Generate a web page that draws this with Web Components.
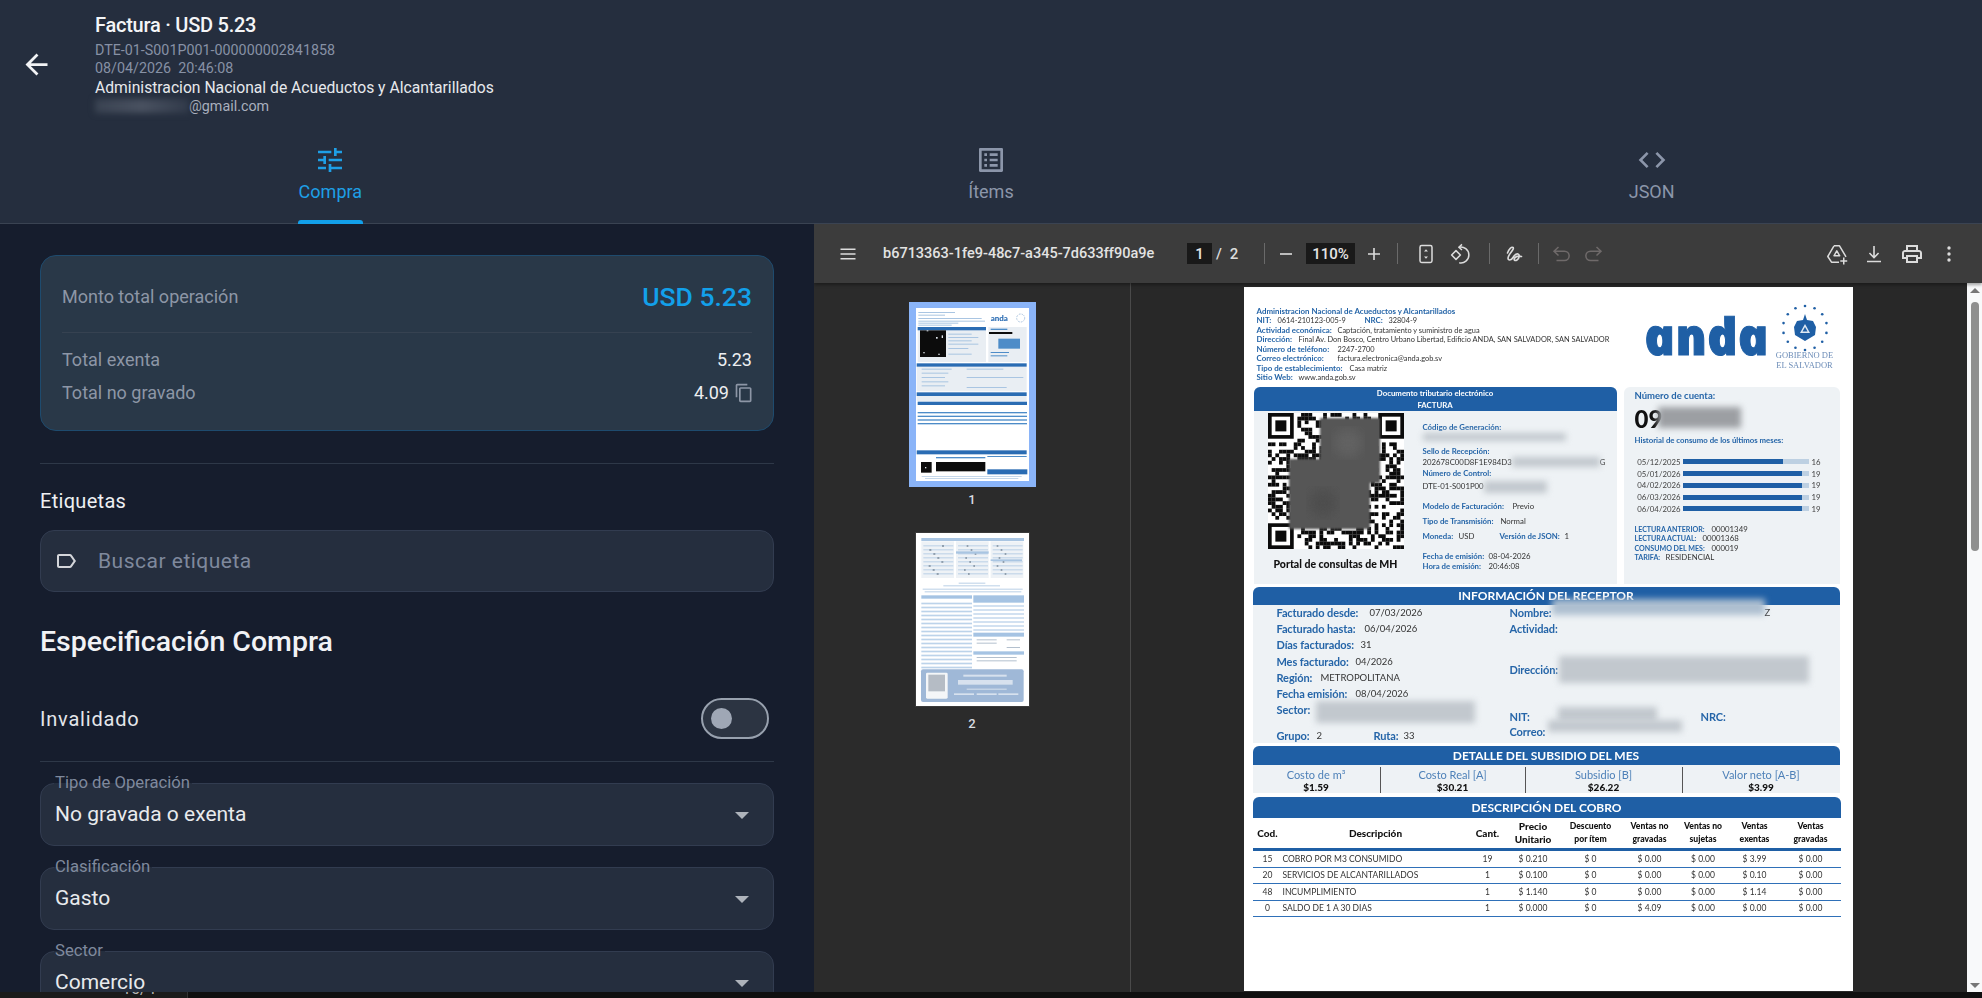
<!DOCTYPE html>
<html lang="es">
<head>
<meta charset="utf-8">
<title>Factura</title>
<style>
html, body { margin: 0; padding: 0; width: 1982px; height: 998px; overflow: hidden; background: #0f0f0f; font-family: Roboto, "Liberation Sans", sans-serif; }
app-shell { width: 1982px; height: 998px; }
</style>
</head>
<body>
<app-shell>
  <bill-header slot="header" title="Factura · USD 5.23" code="DTE-01-S001P001-000000002841858" date="08/04/2026&nbsp; 20:46:08" issuer="Administracion Nacional de Acueductos y Alcantarillados" mail="@gmail.com"></bill-header>
  <tab-bar slot="tabs">
    <tab-item icon="tune" active>Compra</tab-item>
    <tab-item icon="list">Ítems</tab-item>
    <tab-item icon="code">JSON</tab-item>
  </tab-bar>
  <form-panel slot="left">
    <total-card></total-card>
    <tag-search></tag-search>
    <toggle-row>Invalidado</toggle-row>
    <select-field label="Tipo de Operación" value="No gravada o exenta"></select-field>
    <select-field label="Clasificación" value="Gasto"></select-field>
    <select-field label="Sector" value="Comercio"></select-field>
  </form-panel>
  <pdf-viewer slot="right" file="b6713363-1fe9-48c7-a345-7d633ff90a9e"></pdf-viewer>
  <status-strip slot="bottom"></status-strip>
</app-shell>

<script>
const ICONS = {
  back: '<path fill="currentColor" d="M20 11H7.83l5.59-5.59L12 4l-8 8 8 8 1.41-1.41L7.83 13H20v-2z"/>',
  tune: '<path fill="currentColor" d="M3 17v2h6v-2H3zM3 5v2h10V5H3zm10 16v-2h8v-2h-8v-2h-2v6h2zM7 9v2H3v2h4v2h2V9H7zm14 4v-2H11v2h10zm-6-4h2V7h4V5h-4V3h-2v6z"/>',
  list: '<path fill="currentColor" d="M19 5v14H5V5h14m1.1-2H3.9c-.5 0-.9.4-.9.9v16.2c0 .4.4.9.9.9h16.2c.4 0 .9-.5.9-.9V3.9c0-.5-.5-.9-.9-.9zM11 7h6v2h-6V7zm0 4h6v2h-6v-2zm0 4h6v2h-6zM7 7h2v2H7zm0 4h2v2H7zm0 4h2v2H7z"/>',
  code: '<path fill="currentColor" d="M9.4 16.6L4.8 12l4.6-4.6L8 6l-6 6 6 6 1.4-1.4zm5.2 0l4.6-4.6-4.6-4.6L16 6l6 6-6 6-1.4-1.4z"/>',
  copy: '<path fill="currentColor" d="M16 1H4c-1.1 0-2 .9-2 2v14h2V3h12V1zm3 4H8c-1.1 0-2 .9-2 2v14c0 1.1.9 2 2 2h11c1.1 0 2-.9 2-2V7c0-1.1-.9-2-2-2zm0 16H8V7h11v14z"/>',
  label: '<path fill="currentColor" d="M17.63 5.84C17.27 5.33 16.67 5 16 5L5 5.01C3.9 5.01 3 5.9 3 7v10c0 1.1.9 1.99 2 1.99L16 19c.67 0 1.27-.33 1.63-.84L22 12l-4.37-6.16zM16 17H5V7h11l3.55 5L16 17z"/>',
  menu: '<path fill="currentColor" d="M4.5 6.5h15V8h-15zM4.5 11.2h15v1.5h-15zM4.5 16h15v1.5h-15z"/>',
  minus: '<path fill="currentColor" d="M6 11.2h12v1.6H6z"/>',
  plus: '<path fill="currentColor" d="M11.2 6h1.6v5.2H18v1.6h-5.2V18h-1.6v-5.2H6v-1.6h5.2z"/>',
  fit: '<rect x="6" y="3.6" width="12" height="16.8" rx="1.6" fill="none" stroke="currentColor" stroke-width="1.5"/><path fill="currentColor" d="M12 7.2l2 2.3h-4zM12 16.8l-2-2.3h4z"/>',
  rotate: '<g fill="none" stroke="currentColor" stroke-width="1.5" stroke-linejoin="round"><path d="M8 8.6L3.6 13 8 17.4l4.4-4.4z"/><path d="M11 5.2a8 8 0 1 1 .2 15.6"/><path d="M14 2.4l-3.2 2.8L14 8"/></g>',
  draw: '<path fill="none" stroke="currentColor" stroke-width="1.6" stroke-linecap="round" stroke-linejoin="round" d="M5.5 11C7 7 9.5 4.5 11 5.500c2 1.500-5 7-5 10.500 0 2.500 3 3 5-.5 1.500-2.500 3.500-4 5-3.500 2 .7 1.500 4.500-1 6-2 1.200-3.500 0-2.500-1.700 1-1.500 4-2.500 7-1.800"/>',
  undo: '<path fill="none" stroke="currentColor" stroke-width="1.5" d="M9.500 5L5 9.200l4.500 4.300M5 9.200h10.500a4.600 4.600 0 0 1 0 9.300H7.500"/>',
  redo: '<path fill="none" stroke="currentColor" stroke-width="1.5" d="M14.500 5L19 9.200l-4.500 4.300M19 9.200H8.500a4.600 4.600 0 0 0 0 9.300H16.500"/>',
  drive: '<g fill="none" stroke="currentColor" stroke-width="1.5" stroke-linejoin="round"><path d="M9 3.800h5.500l6.500 11M14 20.200H6.500l-3.700-5.700L9 3.800"/><path d="M11.800 8.800l2.900 5H9z"/></g><path fill="currentColor" d="M18 15.500h1.500v2.700h2.700v1.500h-2.700v2.700H18v-2.700h-2.700v-1.500H18z"/>',
  download: '<path fill="currentColor" d="M11.200 4h1.600v9.700l3.200-3.200 1.100 1.100-5.100 5.100-5.100-5.100 1.100-1.100 3.200 3.200zM5 18.800h14v1.500H5z"/>',
  print: '<path fill="currentColor" d="M19 8h-1V3H6v5H5c-1.660 0-3 1.340-3 3v6h4v4h12v-4h4v-6c0-1.660-1.340-3-3-3zM8 5h8v3H8V5zm8 12v2H8v-4h8v2zm2-2v-2H6v2H4v-4c0-.55.45-1 1-1h14c.55 0 1 .45 1 1v4h-2z"/>',
  more: '<circle cx="12" cy="6" r="1.700" fill="currentColor"/><circle cx="12" cy="12" r="1.700" fill="currentColor"/><circle cx="12" cy="18" r="1.700" fill="currentColor"/>'
};

class AppIcon extends HTMLElement {
  constructor() {
    super();
    this.attachShadow({mode: "open"});
  }
  connectedCallback() {
    const size = this.getAttribute("size") || 24;
    this.shadowRoot.innerHTML = `
      <style>
        :host { display: block; width: ${size}px; height: ${size}px; flex: none; }
        svg { display: block; width: 100%; height: 100%; }
      </style>
      <svg viewBox="0 0 24 24">${ICONS[this.getAttribute("name")]}</svg>`;
  }
}
customElements.define("app-icon", AppIcon);

class AppShell extends HTMLElement {
  constructor() {
    super();
    this.attachShadow({mode: "open"}).innerHTML = `
      <style>
        :host { display: grid; grid-template-columns: 814px 1168px; grid-template-rows: 128px 96px 768px 6px; }
        ::slotted([slot=header]), ::slotted([slot=tabs]), ::slotted([slot=bottom]) { grid-column: 1 / 3; }
      </style>
      <slot name="header"></slot>
      <slot name="tabs"></slot>
      <slot name="left"></slot>
      <slot name="right"></slot>
      <slot name="bottom"></slot>`;
  }
}
customElements.define("app-shell", AppShell);

class BillHeader extends HTMLElement {
  constructor() {
    super();
    this.attachShadow({mode: "open"});
  }
  connectedCallback() {
    this.shadowRoot.innerHTML = `
      <style>
        :host { display: grid; grid-template-columns: 95px 1fr; background: #252e3e; height: 128px; box-sizing: border-box; padding-top: 13px; }
        .back { color: #f2f3f5; margin: -13px 0 0 20px; align-self: center; }
        .title { font-size: 20px; line-height: 24px; font-weight: 500; letter-spacing: -.25px; color: #f4f5f7; margin-bottom: 4px; }
        .muted { font-size: 14.300px; line-height: 18px; color: #8791a5; }
        .issuer { font-size: 15.700px; line-height: 18px; color: #e7e9ed; margin-top: 2px; }
        .mail { display: flex; font-size: 14.300px; line-height: 18px; color: #a9b0bd; }
        .hide { width: 94px; height: 14px; margin-top: 2px; background: linear-gradient(90deg, #3a4352, #4a5261 50%, #313a4a); filter: blur(3px); }
      </style>
      <app-icon class="back" name="back" size="33"></app-icon>
      <div>
        <div class="title">${this.getAttribute("title")}</div>
        <div class="muted">${this.getAttribute("code")}</div>
        <div class="muted">${this.getAttribute("date")}</div>
        <div class="issuer">${this.getAttribute("issuer")}</div>
        <div class="mail"><div class="hide"></div>${this.getAttribute("mail")}</div>
      </div>`;
  }
}
customElements.define("bill-header", BillHeader);

class TabBar extends HTMLElement {
  constructor() {
    super();
    this.attachShadow({mode: "open"}).innerHTML = `
      <style>
        :host { display: grid; grid-template-columns: repeat(3, 1fr); background: #252e3e; height: 96px; box-sizing: border-box; border-bottom: 1px solid #3a4352; }
      </style>
      <slot></slot>`;
  }
}
customElements.define("tab-bar", TabBar);

class TabItem extends HTMLElement {
  constructor() {
    super();
    this.attachShadow({mode: "open"});
  }
  connectedCallback() {
    const active = this.hasAttribute("active");
    this.shadowRoot.innerHTML = `
      <style>
        :host { display: flex; flex-direction: column; align-items: center; color: ${active ? "#1e9fe6" : "#8c96aa"}; padding-top: 16px; }
        .text { display: block; font-size: 18px; line-height: 24px; margin-top: 4px; }
        .bar { width: 65px; height: 4px; margin-top: 16px; border-radius: 3px 3px 0 0; background: ${active ? "#12a0ea" : "transparent"}; }
      </style>
      <app-icon name="${this.getAttribute("icon")}" size="32"></app-icon>
      <span class="text"><slot></slot></span>
      <div class="bar"></div>`;
  }
}
customElements.define("tab-item", TabItem);

class FormPanel extends HTMLElement {
  constructor() {
    super();
    this.attachShadow({mode: "open"}).innerHTML = `
      <style>
        :host { display: block; background: #161d2d; height: 768px; overflow: hidden; padding: 31px 40px 0; box-sizing: border-box; width: 814px; }
      </style>
      <slot></slot>`;
  }
}
customElements.define("form-panel", FormPanel);

class TotalCard extends HTMLElement {
  constructor() {
    super();
    this.attachShadow({mode: "open"}).innerHTML = `
      <style>
        :host { display: block; box-sizing: border-box; height: 176px; padding: 24px 21px 0; background: #293848; border: 1px solid #1e4b6e; border-radius: 16px; font-size: 18px; color: #8d96a6; }
        .row { display: flex; justify-content: space-between; align-items: center; line-height: 24px; }
        .top { height: 34px; }
        .usd { font-size: 26.500px; font-weight: 500; color: #12a0ea; }
        hr { border: 0; height: 1px; background: #364251; margin: 18px 0 15px; }
        .val { color: #eceef1; font-size: 18px; display: flex; align-items: center; }
        .second { margin-top: 9px; }
        app-icon { color: #8d96a6; margin: 0 -2px 0 5px; }
      </style>
      <div class="row top"><span>Monto total operación</span><span class="usd">USD 5.23</span></div>
      <hr>
      <div class="row"><span>Total exenta</span><span class="val">5.23</span></div>
      <div class="row second"><span>Total no gravado</span><span class="val">4.09<app-icon name="copy" size="20"></app-icon></span></div>`;
  }
}
customElements.define("total-card", TotalCard);

class TagSearch extends HTMLElement {
  constructor() {
    super();
    this.attachShadow({mode: "open"}).innerHTML = `
      <style>
        :host { display: block; }
        hr { border: 0; height: 1px; background: #2e3848; margin: 32px 0 25px; }
        .caption { font-size: 20px; letter-spacing: .3px; line-height: 24px; color: #eef0f3; }
        .box { display: flex; align-items: center; box-sizing: border-box; height: 62px; margin-top: 17px; padding-left: 13px; background: #252e3e; border: 1px solid #323c50; border-radius: 14px; font-size: 21px; letter-spacing: .5px; color: #7f899d; }
        app-icon { color: #d4d6da; margin-right: 20px; }
        h2 { margin: 33px 0 0; font-size: 28.500px; line-height: 34px; font-weight: 500; color: #f1f2f5; }
      </style>
      <hr>
      <div class="caption">Etiquetas</div>
      <div class="box"><app-icon name="label" size="24"></app-icon>Buscar etiqueta</div>
      <h2>Especificación Compra</h2>`;
  }
}
customElements.define("tag-search", TagSearch);

class ToggleRow extends HTMLElement {
  constructor() {
    super();
    this.attachShadow({mode: "open"}).innerHTML = `
      <style>
        :host { display: block; margin-top: 39px; }
        .row { display: flex; justify-content: space-between; align-items: center; height: 41px; font-size: 20px; letter-spacing: .8px; color: #e4e6ea; }
        .track { display: flex; align-items: center; box-sizing: border-box; width: 68px; height: 41px; margin-right: 5px; padding-left: 8px; border: 2px solid #98a1ae; border-radius: 21px; background: #2c3442; }
        .thumb { width: 21px; height: 21px; border-radius: 50%; background: #9fa7b5; }
        hr { border: 0; height: 1px; background: #2e3848; margin: 22px 0 21px; }
      </style>
      <div class="row"><span><slot></slot></span><div class="track"><div class="thumb"></div></div></div>
      <hr>`;
  }
}
customElements.define("toggle-row", ToggleRow);

class SelectField extends HTMLElement {
  constructor() {
    super();
    this.attachShadow({mode: "open"});
  }
  connectedCallback() {
    this.shadowRoot.innerHTML = `
      <style>
        :host { display: block; position: relative; box-sizing: border-box; height: 63px; margin-bottom: 21px; padding: 18px 24px 0 14px; background: #252e3e; border: 1px solid #323c50; border-radius: 14px; }
        .label { position: absolute; left: 13px; top: -10px; padding: 0 2px 0 1px; font-size: 16.700px; line-height: 18px; color: #7f899d; background: linear-gradient(#161d2d 50%, #252e3e 50%); }
        .row { display: flex; justify-content: space-between; align-items: center; font-size: 21px; line-height: 24px; color: #e8eaed; }
        .arrow { width: 0; height: 0; border-left: 7px solid transparent; border-right: 7px solid transparent; border-top: 7px solid #aeb3bb; margin-top: 3px; }
      </style>
      <span class="label">${this.getAttribute("label")}</span>
      <div class="row"><span>${this.getAttribute("value")}</span><div class="arrow"></div></div>`;
  }
}
customElements.define("select-field", SelectField);

class PdfViewer extends HTMLElement {
  constructor() {
    super();
    this.attachShadow({mode: "open"});
  }
  connectedCallback() {
    this.shadowRoot.innerHTML = `
      <style>
        :host { display: flex; flex-direction: column; height: 768px; overflow: hidden; background: #282828; }
        .body { display: flex; flex: 1; min-height: 0; }
        .main { flex: 1; display: flex; justify-content: center; padding: 4px 2px 0 0; overflow: hidden; }
        .scroll { display: flex; width: 15px; flex: none; position: relative; background: #f8f9fa; }
        .scroll .thumb { width: 8px; height: 249px; margin: 19px 0 0 4px; border-radius: 4px; background: #8f8f8f; }
        .up, .down { position: absolute; left: 3px; width: 0; height: 0; border-left: 5px solid transparent; border-right: 5px solid transparent; }
        .up { top: 5px; border-bottom: 5px solid #777; }
        .down { bottom: 4px; border-top: 5px solid #777; }
      </style>
      <pdf-toolbar file="${this.getAttribute("file")}"></pdf-toolbar>
      <div class="body">
        <pdf-sidebar></pdf-sidebar>
        <div class="main"><pdf-page></pdf-page></div>
        <div class="scroll"><div class="up"></div><div class="thumb"></div><div class="down"></div></div>
      </div>`;
  }
}
customElements.define("pdf-viewer", PdfViewer);

class PdfToolbar extends HTMLElement {
  constructor() {
    super();
    this.attachShadow({mode: "open"});
  }
  connectedCallback() {
    this.shadowRoot.innerHTML = `
      <style>
        :host { display: flex; align-items: center; flex: none; box-sizing: border-box; height: 59px; padding: 0 21px 0 22px; background: #3c3c3c; color: #dcdcdc; font-size: 14px; box-shadow: 0 2px 3px rgba(0,0,0,.35); position: relative; z-index: 1; }
        .file { width: 304px; margin-left: 23px; font-size: 14.500px; font-weight: 500; color: #e3e3e3; white-space: nowrap; }
        .box { display: flex; align-items: center; justify-content: center; height: 21px; background: #191919; color: #e6e6e6; font-size: 15px; font-weight: 500; }
        .sep { width: 1px; height: 21px; background: #6a6a6a; }
        .off { color: #6f6a6a; }
        .num { text-align: center; font-size: 15px; font-weight: 500; }
        .grow { flex: 1; }
      </style>
      <app-icon name="menu" ></app-icon>
      <span class="file">${this.getAttribute("file")}</span>
      <span class="box" style="width:25px">1</span>
      <span class="num" style="width:8px;margin-left:3px">/</span>
      <span class="num" style="width:10px;margin-left:6px">2</span>
      <span class="sep" style="margin-left:25px"></span>
      <app-icon name="minus" style="margin-left:9px"></app-icon>
      <span class="box" style="width:49px;margin-left:8px">110%</span>
      <app-icon name="plus" style="margin-left:7px"></app-icon>
      <span class="sep" style="margin-left:11px"></span>
      <app-icon name="fit" style="margin-left:16px"></app-icon>
      <app-icon name="rotate" style="margin-left:10px"></app-icon>
      <span class="sep" style="margin-left:17px"></span>
      <app-icon name="draw" style="margin-left:12px"></app-icon>
      <span class="sep" style="margin-left:12px"></span>
      <app-icon class="off" name="undo" style="margin-left:10px"></app-icon>
      <app-icon class="off" name="redo" style="margin-left:9px"></app-icon>
      <span class="grow"></span>
      <app-icon name="drive"></app-icon>
      <app-icon name="download" style="margin-left:13px"></app-icon>
      <app-icon name="print" style="margin-left:14px"></app-icon>
      <app-icon name="more" style="margin-left:13px"></app-icon>`;
  }
}
customElements.define("pdf-toolbar", PdfToolbar);

function rectList(list, fill) {
  return list.map(r => `<rect x="${r[0]}" y="${r[1]}" width="${r[2]}" height="${r[3]}" fill="${fill}"/>`).join("");
}

class PdfSidebar extends HTMLElement {
  constructor() {
    super();
    this.attachShadow({mode: "open"});
  }
  connectedCallback() {
    const blue = "#2a6cb3", pale = "#a9c5e2", grey = "#e9eef3", ink = "#0c0c0c";
    let first = rectList([[113,125,205,10],[110,234,330,10],[110,321,330,11],[113,349,328,10],[110,495,330,12],[322,552,120,15]], blue);
    first = rectList([[325,125,115,105],[113,135,205,95],[110,244,330,74],[110,332,330,15]], grey) + first;
    first += rectList([[115,80,110,3],[115,88,80,3],[115,98,190,3],[115,106,200,3],[115,112,120,3],[115,118,100,3],[205,145,70,3],[205,155,90,3],[205,165,70,3],[205,175,90,3],[205,188,60,3],[205,205,70,3],[125,250,90,3],[125,262,80,3],[125,275,70,3],[125,288,80,3],[125,300,70,3],[260,250,110,3],[260,275,170,3],[260,305,120,3],[125,572,300,2],[135,578,280,2]], pale);
    first += rectList([[355,160,65,30],[332,130,50,4],[332,200,55,3],[332,210,50,3],[113,380,328,4],[113,391,328,4],[113,402,328,4],[113,413,328,4],[168,515,148,4],[322,512,118,3]], "#4d8cc8");
    first += rectList([[120,135,78,80],[168,530,148,28],[123,530,32,32],[327,140,70,6]], ink);
    first += rectList([[140,135,5,3],[168,155,5,5],[185,150,4,8],[130,200,4,4],[175,205,4,4],[135,545,4,4]], "#dfe5ea");
    first += rectList([[325,520,110,25]], "#ffffff");
    first += `<text x="332" y="106" font-family="Lato, sans-serif" font-size="24" font-weight="900" fill="${blue}">anda</text><circle cx="422" cy="98" r="12" fill="none" stroke="#7fa6cf" stroke-width="3" stroke-dasharray="2 3"/>`;

    let second = rectList([[124,68,308,9]], pale);
    second += rectList([[124,78,98,110],[228,78,98,110],[332,78,98,110]], "#eef2f6");
    for (let y = 90; y < 185; y += 12) {
      second += rectList([[130,y,90,3],[234,y,90,3],[338,y,90,3]], "#b9cfe6");
      second += rectList([[146 + (y % 50),y,6,4],[250 + (y % 40),y,5,4],[350 + (y % 30),y,5,4]], "#71808f");
    }
    second += rectList([[228,108,98,7],[332,132,94,5]], pale);
    second += rectList([[190,210,170,3],[128,220,300,3],[134,228,290,3],[236,202,80,3]], "#b9cfe6");
    second += rectList([[124,240,152,10],[280,240,152,22],[280,352,152,12],[280,408,152,10]], "#a5c3e3");
    for (let y = 262; y < 455; y += 12) {
      second += rectList([[124,y,152,5]], "#bcd3ea");
      if (y < 345) second += rectList([[280,y + 8,152,4]], "#bcd3ea");
    }
    second += rectList([[290,372,60,3],[380,372,40,3],[290,382,60,3],[380,395,40,3],[290,425,120,3],[290,435,120,3]], "#b3c0ce");
    second += `<rect x="123" y="462" width="308" height="98" rx="6" fill="#9fb8d7"/><rect x="138" y="472" width="65" height="78" rx="4" fill="#f4f6f8"/>`;
    second += rectList([[145,478,50,50]], "#b5bcc5");
    second += rectList([[250,478,130,6],[234,494,164,14],[260,520,120,3],[222,534,60,5],[290,534,60,5],[355,534,60,5]], "#d7e1ee");

    this.shadowRoot.innerHTML = `
      <style>
        :host { display: flex; flex-direction: column; align-items: center; flex: none; width: 317px; box-sizing: border-box; padding: 19px 0 0 0; border-right: 1px solid #4a4a4a; background: #2b2b2b; }
        .sel { padding: 6px 7px; background: #8ab4f8; }
        svg { display: block; width: 113px; height: 173px; }
        .n { font: 500 13px/16px Roboto, sans-serif; color: #d9dde2; margin: 5px 0 0; }
        .thumb { margin-top: 25px; outline: 1px solid #3a3a3a; }
      </style>
      <div class="sel"><svg viewBox="108 68 339 519" style="background:#fff;filter:blur(.5px)">${first}</svg></div>
      <div class="n">1</div>
      <div class="thumb"><svg viewBox="108 53 339 519" style="background:#fff;filter:blur(.5px)">${second}</svg></div>
      <div class="n" style="margin-top:10px">2</div>`;
  }
}
customElements.define("pdf-sidebar", PdfSidebar);

// the blurred codes in the invoice are noise, so a small seeded generator is enough
function buildQr() {
  let seed = 7321, cells = "";
  const rnd = () => (seed = (seed * 16807) % 2147483647) / 2147483647;
  const n = 37, s = 136 / n;
  const inFinder = (x, y) => (x < 8 && y < 8) || (x > n - 9 && y < 8) || (x < 8 && y > n - 9);
  for (let y = 0; y < n; y++) {
    for (let x = 0; x < n; x++) {
      if (!inFinder(x, y) && rnd() > .5) cells += `<rect x="${x * s}" y="${y * s}" width="${s + .1}" height="${s + .1}"/>`;
    }
  }
  const finder = (x, y) => `<rect x="${x * s}" y="${y * s}" width="${7 * s}" height="${7 * s}"/><rect x="${(x + 1) * s}" y="${(y + 1) * s}" width="${5 * s}" height="${5 * s}" fill="#fff"/><rect x="${(x + 2) * s}" y="${(y + 2) * s}" width="${3 * s}" height="${3 * s}"/>`;
  return `<svg class="qr" viewBox="0 0 136 136">
    <defs><filter id="soft"><feGaussianBlur stdDeviation="1.2"/></filter><filter id="softer"><feGaussianBlur stdDeviation="6"/></filter></defs>
    <rect width="136" height="136" fill="#fff"/>
    <g fill="#0b0b0b">${cells}${finder(0, 0)}${finder(n - 7, 0)}${finder(0, n - 7)}</g>
    <path d="M52 5h60v65h-10v46H21V46h31z" fill="#575757" filter="url(#soft)"/>
    <circle cx="80" cy="30" r="14" fill="#626262" filter="url(#softer)"/><circle cx="55" cy="90" r="14" fill="#4e4e4e" filter="url(#softer)"/>
  </svg>`;
}

function buildEmblem() {
  let dots = "";
  for (let i = 0; i < 14; i++) {
    const a = i / 14 * Math.PI * 2 - Math.PI / 2;
    dots += `<circle cx="${24 + 22 * Math.cos(a)}" cy="${24 + 22 * Math.sin(a)}" r="1.300"/>`;
  }
  return `<svg class="emblem" viewBox="0 0 48 48"><g fill="#1f5fa5">${dots}
    <path d="M24 10l2 6 6 1 3 6-1 8-5 3-5 3-5-3-5-3-1-8 3-6 6-1z"/></g>
    <path d="M24 20l5 9H19z" fill="#dfe9f3"/><path d="M24 23l2.500 4.500h-5z" fill="#1f5fa5"/></svg>`;
}

class PdfPage extends HTMLElement {
  constructor() {
    super();
    this.attachShadow({mode: "open"});
  }
  connectedCallback() {
    const head = [
      ["Precio<br>Unitario", "font-size:10px"], ["Descuento<br>por ítem"], ["Ventas no<br>gravadas"], ["Ventas no<br>sujetas"], ["Ventas<br>exentas"], ["Ventas<br>gravadas"]
    ];
    const rows = [
      ["15", "COBRO POR M3 CONSUMIDO", "19", "$ 0.210", "$ 0", "$ 0.00", "$ 0.00", "$ 3.99", "$ 0.00"],
      ["20", "SERVICIOS DE ALCANTARILLADOS", "1", "$ 0.100", "$ 0", "$ 0.00", "$ 0.00", "$ 0.10", "$ 0.00"],
      ["48", "INCUMPLIMIENTO", "1", "$ 1.140", "$ 0", "$ 0.00", "$ 0.00", "$ 1.14", "$ 0.00"],
      ["0", "SALDO DE 1 A 30 DIAS", "1", "$ 0.000", "$ 0", "$ 4.09", "$ 0.00", "$ 0.00", "$ 0.00"]
    ];
    const usage = [["05/12/2025", 80, "16"], ["05/01/2026", 95, "19"], ["04/02/2026", 95, "19"], ["06/03/2026", 95, "19"], ["06/04/2026", 95, "19"]];
    const lab = (text, w) => `<b class="lab" style="width:${w}px">${text}</b>`;
    this.shadowRoot.innerHTML = `
      <style>
        :host { display: block; flex: none; width: 609px; height: 704px; box-sizing: border-box; padding: 0 13px 0 9px; background: #fff; color: #333; font-family: Lato, "Open Sans", sans-serif; font-size: 7.800px; overflow: hidden; filter: blur(.3px); }
        b { color: #2565a8; font-weight: 700; }
        .lab { display: inline-block; vertical-align: top; white-space: nowrap; }
        .top { display: flex; height: 100px; }
        .lines { flex: 1; padding: 20px 0 0 4px; font-size: 7.400px; line-height: 9.430px; white-space: nowrap; }
        .lines b { font-size: 7.900px; }
        .brand { display: flex; align-items: flex-start; padding-right: 5px; }
        .anda { margin: 23px 7px 0 0; font-family: "Open Sans", sans-serif; font-style: italic; font-size: 51px; line-height: 50px; font-weight: 800; color: #1f5fa5; transform: skewX(12deg); -webkit-text-stroke: 1px #1f5fa5; }
        .gov { display: flex; flex-direction: column; align-items: center; width: 60px; padding-top: 17px; font-family: "Liberation Serif", serif; font-size: 8.500px; line-height: 9.500px; color: #6d8db8; text-align: center; white-space: nowrap; }
        .emblem { width: 48px; height: 48px; margin-bottom: -1px; }
        .split { display: flex; gap: 7px; height: 197px; padding-left: 1px; }
        .card { background: #eef2f5; border-radius: 6px 6px 0 0; }
        .doc { width: 363px; }
        .band { background: #1f5fa5; color: #fff; font-weight: 700; text-align: center; border-radius: 6px 6px 0 0; }
        .docband { height: 24px; font-size: 7.800px; line-height: 12px; }
        .docbody { display: flex; }
        .qrcol { width: 155px; padding: 2px 0 0 14px; box-sizing: border-box; }
        .qr { display: block; width: 136px; height: 136px; }
        .portal { margin: 10px 0 0 -3px; width: 142px; text-align: center; font-size: 10.500px; font-weight: 900; line-height: 10px; color: #111; white-space: nowrap; }
        .fields { padding: 11px 0 0 14px; line-height: 10px; white-space: nowrap; }
        .line { height: 10px; }
        .bl { display: inline-block; background: #c2c8ce; filter: blur(3px); vertical-align: top; }
        .acc { width: 216px; padding: 3px 0 0 11px; box-sizing: border-box; }
        .acc h4 { margin: 0; font-size: 9.500px; line-height: 11px; font-weight: 700; color: #2565a8; }
        .big { height: 24px; margin-top: 6px; font-size: 24px; line-height: 24px; font-weight: 900; color: #111; white-space: nowrap; }
        .big .bl { width: 83px; height: 21px; margin-left: -4px; background: #9c9fa3; vertical-align: top; }
        .hist { margin: 4px 0 11px; font-weight: 700; line-height: 10px; }
        .use { display: grid; grid-template-columns: 46px 126px 20px; column-gap: 2px; align-items: center; height: 11.750px; color: #444; text-align: right; }
        .use span:last-child { text-align: left; padding-left: 1px; }
        .track { height: 5px; background: #bdd0e2; }
        .fill { height: 100%; background: #1f5fa5; }
        .reads { margin-top: 10px; line-height: 9.500px; }
        .reads b { font-size: 7.100px; }
        .info { width: 587px; margin-top: 3px; }
        .titleband { font-size: 12px; }
        .info .body { display: grid; grid-template-columns: 233px 1fr; height: 138px; padding: 3px 0 0 24px; box-sizing: border-box; background: #eef2f5; font-size: 9.500px; line-height: 10px; white-space: nowrap; }
        .info .row { height: 10px; }
        .info .row b { font-size: 11px; letter-spacing: -.1px; }
        .sub { display: grid; grid-template-columns: 128px 145px 157px 157px; height: 28px; background: #eef2f5; text-align: center; font-size: 11px; }
        .sub div { padding-top: 2px; line-height: 12px; color: #4d80b8; border-right: 1px solid #555; margin: 2px 0; }
        .sub div:last-child { border: 0; }
        .sub strong { display: block; color: #111; font-weight: 900; font-size: 10px; }
        .grid { display: grid; grid-template-columns: 30px 186px 38px 53px 62px 56px 51px 52px 60px; align-items: center; text-align: center; white-space: nowrap; width: 588px; }
        .thead { height: 30px; color: #111; font-weight: 900; font-size: 8.600px; line-height: 13px; border-bottom: 3px solid #1f5fa5; box-sizing: content-box; }
        .thead .l { font-size: 10px; }
        .tr { height: 15.500px; color: #333; font-size: 8.500px; line-height: 14px; border-bottom: 1.500px solid #2f70b8; }
        .tr .d { text-align: left; }
      </style>
      <div class="top">
        <div class="lines">
          <div><b>Administracion Nacional de Acueductos y Alcantarillados</b></div>
          <div>${lab("NIT:", 21)}<span class="lab" style="width:87px;font-weight:400;color:#333">0614-210123-005-9</span>${lab("NRC:", 24)}32804-9</div>
          <div>${lab("Actividad económica:", 81)}Captación, tratamiento y suministro de agua</div>
          <div>${lab("Dirección:", 42)}Final Av. Don Bosco, Centro Urbano Libertad, Edificio ANDA, SAN SALVADOR, SAN SALVADOR</div>
          <div>${lab("Número de teléfono:", 81)}2247-2700</div>
          <div>${lab("Correo electrónico:", 81)}factura.electronica@anda.gob.sv</div>
          <div>${lab("Tipo de establecimiento:", 93)}Casa matriz</div>
          <div>${lab("Sitio Web:", 42)}www.anda.gob.sv</div>
        </div>
        <div class="brand">
          <div class="anda">anda</div>
          <div class="gov">${buildEmblem()}GOBIERNO DE<br>EL SALVADOR</div>
        </div>
      </div>
      <div class="split">
        <div class="card doc">
          <div class="band docband">Documento tributario electrónico<br>FACTURA</div>
          <div class="docbody">
            <div class="qrcol">${buildQr()}<div class="portal">Portal de consultas de MH</div></div>
            <div class="fields">
              <div class="line"><b>Código de Generación:</b></div>
              <div class="line" style="margin-top:1px"><span class="bl" style="width:143px;height:8px"></span></div>
              <div class="line" style="margin-top:3px"><b>Sello de Recepción:</b></div>
              <div class="line" style="margin-top:1px">202678C00D8F1E984D3<span class="bl" style="width:88px;height:10px"></span>G</div>
              <div class="line" style="margin-top:1px"><b>Número de Control:</b></div>
              <div class="line" style="margin-top:3px">DTE-01-S001P00<span class="bl" style="width:63px;height:12px"></span></div>
              <div class="line" style="margin-top:10px">${lab("Modelo de Facturación:", 90)}Previo</div>
              <div class="line" style="margin-top:5px">${lab("Tipo de Transmisión:", 78)}Normal</div>
              <div class="line" style="margin-top:5px">${lab("Moneda:", 36)}<span class="lab" style="width:41px;font-weight:400;color:#333">USD</span>${lab("Versión de JSON:", 65)}1</div>
              <div class="line" style="margin-top:10px">${lab("Fecha de emisión:", 66)}08-04-2026</div>
              <div class="line">${lab("Hora de emisión:", 66)}20:46:08</div>
            </div>
          </div>
        </div>
        <div class="card acc">
          <h4>Número de cuenta:</h4>
          <div class="big">09<span class="bl"></span></div>
          <div class="hist"><b>Historial de consumo de los últimos meses:</b></div>
          ${usage.map(u => `<div class="use"><span>${u[0]}</span><div class="track"><div class="fill" style="width:${u[1]}%"></div></div><span>${u[2]}</span></div>`).join("")}
          <div class="reads">
            <div>${lab("LECTURA ANTERIOR:", 77)}00001349</div>
            <div>${lab("LECTURA ACTUAL:", 68)}00001368</div>
            <div>${lab("CONSUMO DEL MES:", 77)}000019</div>
            <div>${lab("TARIFA:", 31)}RESIDENCIAL</div>
          </div>
        </div>
      </div>
      <div class="info">
        <div class="band titleband" style="height:18px;line-height:18px">INFORMACIÓN DEL RECEPTOR</div>
        <div class="body">
          <div>
            <div class="row">${lab("Facturado desde:", 93)}07/03/2026</div>
            <div class="row" style="margin-top:6px">${lab("Facturado hasta:", 88)}06/04/2026</div>
            <div class="row" style="margin-top:6px">${lab("Días facturados:", 84)}31</div>
            <div class="row" style="margin-top:7px">${lab("Mes facturado:", 79)}04/2026</div>
            <div class="row" style="margin-top:6px">${lab("Región:", 44)}METROPOLITANA</div>
            <div class="row" style="margin-top:6px">${lab("Fecha emisión:", 79)}08/04/2026</div>
            <div class="row" style="margin-top:6px">${lab("Sector:", 39)}<span class="bl" style="width:159px;height:22px;margin-top:-4px"></span></div>
            <div class="row" style="margin-top:16px"><span class="lab" style="width:97px">${lab("Grupo:", 40)}2</span>${lab("Ruta:", 30)}33</div>
          </div>
          <div>
            <div class="row">${lab("Nombre:", 42)}<span class="bl" style="width:213px;height:16px;margin-top:-9px;background:#aebfd0"></span>Z</div>
            <div class="row" style="margin-top:6px"><b>Actividad:</b></div>
            <div class="row" style="margin-top:31px">${lab("Dirección:", 49)}<span class="bl" style="width:250px;height:27px;margin-top:-9px"></span></div>
            <div class="row" style="margin-top:37px">${lab("NIT:", 48)}<span class="bl" style="width:99px;height:15px;margin-top:-5px"></span><b style="margin-left:44px">NRC:</b></div>
            <div class="row" style="margin-top:5px">${lab("Correo:", 38)}<span class="bl" style="width:134px;height:12px;margin-top:-7px"></span></div>
          </div>
        </div>
      </div>
      <div class="info">
        <div class="band titleband" style="height:19px;line-height:19px">DETALLE DEL SUBSIDIO DEL MES</div>
        <div class="sub">
          <div>Costo de m³<strong>$1.59</strong></div>
          <div>Costo Real [A]<strong>$30.21</strong></div>
          <div>Subsidio [B]<strong>$26.22</strong></div>
          <div>Valor neto [A-B]<strong>$3.99</strong></div>
        </div>
      </div>
      <div style="margin-top:4px;width:588px">
        <div class="band titleband" style="height:21px;line-height:21px">DESCRIPCIÓN DEL COBRO</div>
        <div class="grid thead">
          <div class="l">Cod.</div><div class="l">Descripción</div><div class="l">Cant.</div>
          ${head.map(h => `<div style="${h[1] || ""}">${h[0]}</div>`).join("")}
        </div>
        ${rows.map(r => `<div class="grid tr">${r.map((c, i) => `<div class="${i == 1 ? "d" : ""}">${c}</div>`).join("")}</div>`).join("")}
      </div>`;
  }
}
customElements.define("pdf-page", PdfPage);

class StatusStrip extends HTMLElement {
  constructor() {
    super();
    this.attachShadow({mode: "open"}).innerHTML = `
      <style>
        :host { display: flex; height: 6px; overflow: hidden; background: #101010; }
        .left { width: 188px; height: 6px; background: #1b1b1b; border-right: 1px solid #333; padding-left: 122px; box-sizing: border-box; }
        span { display: block; margin-top: -12px; font-size: 16px; line-height: 18px; color: #b5b5b5; }
      </style>
      <div class="left"><span>15/4</span></div>`;
  }
}
customElements.define("status-strip", StatusStrip);
</script>
</body>
</html>
